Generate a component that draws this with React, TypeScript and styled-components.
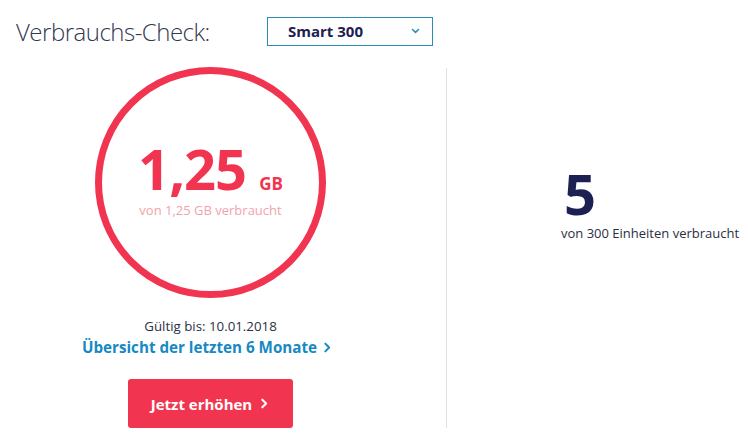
import React from "react";
import styled, { createGlobalStyle } from "styled-components";

const RED = "#f1344f";
const NAVY = "#1d2152";
const TEAL = "#1689c2";

const GlobalStyle = createGlobalStyle`
  html, body {
    margin: 0;
    padding: 0;
    background: #ffffff;
  }
  body {
    font-family: "Open Sans", "Noto Sans", "DejaVu Sans", sans-serif;
    color: #2b2f45;
  }
`;

const Page = styled.div`
  width: 748px;
  height: 442px;
  overflow: hidden;
`;

const Header = styled.div`
  display: flex;
  align-items: center;
  padding: 14px 0 0 16px;
  height: 34px;
`;

const Title = styled.h1`
  margin: 0;
  width: 251px;
  font-size: 24px;
  font-weight: 300;
  color: #33384f;
  letter-spacing: -0.5px;
`;

const Select = styled.div`
  box-sizing: border-box;
  display: flex;
  align-items: center;
  justify-content: space-between;
  width: 166px;
  height: 29px;
  padding: 0 12px 0 20px;
  border: 1px solid #2a8db5;
  font-size: 15px;
  font-weight: 700;
  color: ${NAVY};
`;

const Body = styled.div`
  display: flex;
  margin-top: 20px;
`;

const LeftColumn = styled.div`
  box-sizing: border-box;
  width: 447px;
  height: 360px;
  padding-right: 25px;
  border-right: 1px solid #e1e1e1;
  display: flex;
  flex-direction: column;
  align-items: center;
`;

const Ring = styled.div`
  box-sizing: border-box;
  width: 231px;
  height: 231px;
  margin-top: -1px;
  border: 7px solid ${RED};
  border-radius: 50%;
  display: flex;
  flex-direction: column;
  align-items: center;
  justify-content: center;
`;

const AmountRow = styled.div`
  display: flex;
  align-items: baseline;
  gap: 13px;
  color: ${RED};
  font-weight: 700;
  line-height: 0.8;
`;

const Amount = styled.span`
  font-size: 56px;
  letter-spacing: -1px;
`;

const Unit = styled.span`
  font-size: 17px;
`;

const AmountNote = styled.div`
  margin-top: 12px;
  font-size: 13px;
  line-height: 1.2;
  color: #f3a3ac;
`;

const Valid = styled.div`
  margin-top: 19px;
  font-size: 13.3px;
  color: #2b2f45;
`;

const HistoryLink = styled.a`
  display: flex;
  align-items: center;
  gap: 5px;
  margin-top: 2px;
  margin-left: -6px;
  font-size: 15.2px;
  font-weight: 700;
  color: ${TEAL};
  text-decoration: none;
`;

const Button = styled.button`
  display: flex;
  align-items: center;
  justify-content: center;
  gap: 7px;
  margin-top: 22px;
  width: 165px;
  height: 49px;
  border: none;
  border-radius: 3px;
  background: ${RED};
  color: #ffffff;
  font-family: inherit;
  font-size: 15px;
  font-weight: 700;
  cursor: pointer;
`;

const RightColumn = styled.div`
  display: flex;
  flex-direction: column;
  padding: 97px 0 0 117px;
`;

const Units = styled.div`
  font-size: 56px;
  font-weight: 700;
  line-height: 1;
  color: ${NAVY};
`;

const UnitsNote = styled.div`
  margin-top: 3px;
  margin-left: -3px;
  font-size: 13px;
  color: #2b2f45;
  white-space: nowrap;
`;

const Chevron = ({ size, color, width }: { size: number; color: string; width: number }) => (
  <svg width={size} height={size} viewBox="0 0 10 10">
    <polyline
      points="3,1.5 6.5,5 3,8.5"
      fill="none"
      stroke={color}
      strokeWidth={width}
      strokeLinecap="round"
      strokeLinejoin="round"
    />
  </svg>
);

const ChevronDown = () => (
  <svg width="9" height="6" viewBox="0 0 9 6">
    <polyline
      points="1.5,1.5 4.5,4.3 7.5,1.5"
      fill="none"
      stroke="#2a8db5"
      strokeWidth="1.6"
      strokeLinecap="round"
      strokeLinejoin="round"
    />
  </svg>
);

export default function App() {
  return (
    <Page>
      <GlobalStyle />
      <Header>
        <Title>Verbrauchs-Check:</Title>
        <Select>
          <span>Smart 300</span>
          <ChevronDown />
        </Select>
      </Header>
      <Body>
        <LeftColumn>
          <Ring>
            <AmountRow>
              <Amount>1,25</Amount>
              <Unit>GB</Unit>
            </AmountRow>
            <AmountNote>von 1,25 GB verbraucht</AmountNote>
          </Ring>
          <Valid>Gültig bis: 10.01.2018</Valid>
          <HistoryLink href="#">
            Übersicht der letzten 6 Monate
            <Chevron size={11} color={TEAL} width={1.8} />
          </HistoryLink>
          <Button>
            Jetzt erhöhen
            <Chevron size={11} color="#ffffff" width={1.9} />
          </Button>
        </LeftColumn>
        <RightColumn>
          <Units>5</Units>
          <UnitsNote>von 300 Einheiten verbraucht</UnitsNote>
        </RightColumn>
      </Body>
    </Page>
  );
}
